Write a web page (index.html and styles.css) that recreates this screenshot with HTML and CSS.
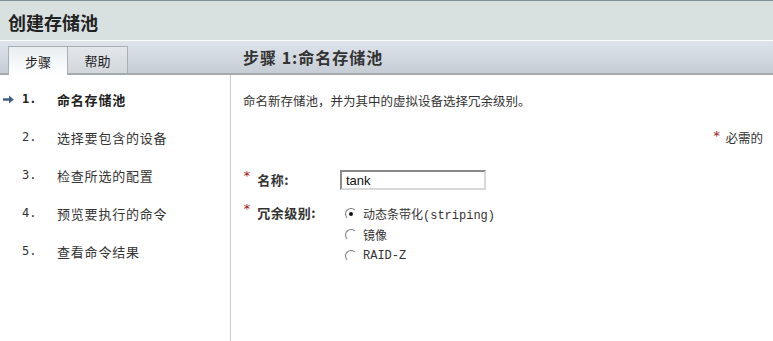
FILE: index.html
```html
<!DOCTYPE html>
<html>
<head>
	<title>创建存储池</title>
	<link rel="stylesheet" href="styles.css">
</head>
<body>
	<div class="_wizard">
		<div class="_head">
			<h1 class="_title">创建存储池</h1>
		</div>
		<div class="_bar">
			<div class="_tabs">
				<div class="_tab _active">步骤</div>
				<div class="_tab">帮助</div>
			</div>
			<h2 class="_step-title">步骤 1:命名存储池</h2>
		</div>
		<div class="_main">
			<ol class="_steps">
				<li class="_step _current">
					<span class="_arrow"><svg width="11" height="9" viewBox="0 0 11 9"><path d="M0 3.2h6V0.5L10.8 4.5 6 8.5V5.8H0z" fill="#3f5f86"/></svg></span>
					<span class="_num">1.</span>
					<span class="_label">命名存储池</span>
				</li>
				<li class="_step"><span class="_arrow"></span><span class="_num">2.</span><span class="_label">选择要包含的设备</span></li>
				<li class="_step"><span class="_arrow"></span><span class="_num">3.</span><span class="_label">检查所选的配置</span></li>
				<li class="_step"><span class="_arrow"></span><span class="_num">4.</span><span class="_label">预览要执行的命令</span></li>
				<li class="_step"><span class="_arrow"></span><span class="_num">5.</span><span class="_label">查看命令结果</span></li>
			</ol>
			<div class="_content">
				<p class="_desc">命名新存储池，并为其中的虚拟设备选择冗余级别。</p>
				<p class="_required"><span class="_star">*</span> 必需的</p>
				<div class="_field">
					<div class="_field-label"><span class="_star">*</span>名称:</div>
					<input type="text" class="_input" value="tank">
				</div>
				<div class="_field _levels">
					<div class="_field-label"><span class="_star">*</span>冗余级别:</div>
					<div class="_options">
						<label class="_option"><span class="_radio _checked"></span>动态条带化(striping)</label>
						<label class="_option"><span class="_radio"></span>镜像</label>
						<label class="_option"><span class="_radio"></span>RAID-Z</label>
					</div>
				</div>
			</div>
		</div>
	</div>
</body>
</html>
```

FILE: styles.css
```css
	html, body {
		margin: 0;
		height: 100%;
		background: #fff;
		color: #333;
		font-family: "Noto Sans CJK SC", "DejaVu Sans", sans-serif;
		font-size: 13px;
	}

	._wizard {
		display: flex;
		flex-direction: column;
		height: 100%;
		border-top: 1px solid #7d8c95;
		box-sizing: border-box;
	}

	._head {
		height: 39px;
		background: #d8e0e0;
		border-bottom: 1px solid #fbfdfd;
		display: flex;
		align-items: center;
		padding-left: 8px;
		flex-shrink: 0;
	}

	._title {
		margin: 0;
		font-size: 18px;
		font-weight: bold;
		color: #222;
		line-height: 1;
		margin-top: 2px;
	}

	._bar {
		height: 32px;
		background: linear-gradient(#dfe4ec, #c6cdd4);
		border-bottom: 2px solid #a4aaae;
		display: flex;
		align-items: flex-end;
		flex-shrink: 0;
		padding-right: 7px;
	}

	._tabs {
		width: 231px;
		display: flex;
		padding-left: 8px;
		box-sizing: border-box;
		align-self: stretch;
		align-items: flex-end;
	}

	._tab {
		width: 60px;
		height: 29px;
		line-height: 29px;
		text-align: center;
		font-size: 13px;
		color: #222;
		border: 1px solid #a8afb5;
		border-bottom: none;
		box-sizing: border-box;
		background: linear-gradient(#e3e7ec, #d2d7dc);
		margin-bottom: -2px;
	}

	._tab._active {
		background: linear-gradient(#e9edf0, #fff);
	}

	._tab + ._tab {
		border-left: none;
		height: 27px;
		margin-bottom: 0;
		line-height: 27px;
	}

	._step-title {
		margin: 0;
		align-self: center;
		padding-left: 12px;
		font-size: 16px;
		font-weight: bold;
		color: #333;
		letter-spacing: 1px;
	}

	._main {
		flex-grow: 1;
		display: flex;
	}

	._steps {
		width: 231px;
		flex-shrink: 0;
		margin: 0;
		padding: 5px 0 0;
		list-style: none;
		border-right: 1px solid #c9c9c9;
		box-sizing: border-box;
	}

	._step {
		display: flex;
		align-items: center;
		height: 38px;
	}

	._arrow {
		width: 22px;
		padding-left: 3px;
		box-sizing: border-box;
		display: flex;
		align-items: center;
	}

	._num {
		width: 35px;
		font-family: "DejaVu Sans Mono", monospace;
		font-size: 12px;
	}

	._label {
		font-size: 13px;
		letter-spacing: 0.8px;
	}

	._current ._num, ._current ._label {
		font-weight: bold;
		color: #222;
	}

	._content {
		flex-grow: 1;
		padding: 0 10px 0 12px;
	}

	._desc {
		margin: 18px 0 0;
		line-height: 16px;
		font-size: 12.5px;
	}

	._required {
		margin: 21px 0 0;
		text-align: right;
		line-height: 16px;
		font-size: 12.5px;
	}

	._star {
		color: #a31515;
		font-family: "DejaVu Sans Mono", monospace;
		font-size: 13px;
		font-weight: normal;
		vertical-align: top;
		line-height: 12px;
		margin-right: 2px;
	}

	._field {
		display: flex;
		align-items: center;
		margin-top: 24px;
	}

	._field-label {
		width: 97px;
		flex-shrink: 0;
		font-weight: bold;
		font-size: 13px;
		line-height: 20px;
		letter-spacing: 0.5px;
	}

	._field-label ._star {
		margin-right: 6px;
	}

	._input {
		width: 146px;
		height: 20px;
		box-sizing: border-box;
		border: 2px solid;
		border-color: #8a8a8a #d8d8d8 #d8d8d8 #8a8a8a;
		padding: 0 4px;
		font-family: "Liberation Sans", sans-serif;
		font-size: 13px;
		color: #111;
		outline: none;
	}

	._levels {
		margin-top: 13px;
		align-items: flex-start;
	}

	._options {
		display: flex;
		flex-direction: column;
		padding-left: 5px;
	}

	._option {
		display: flex;
		align-items: center;
		height: 21px;
		font-family: "Liberation Mono", "Noto Sans CJK SC", monospace;
		font-size: 12px;
	}

	._radio {
		width: 10px;
		height: 10px;
		border-radius: 50%;
		border: 1px solid;
		border-color: #7a7a7a #fff #fff #7a7a7a;
		margin-right: 6px;
		position: relative;
		flex-shrink: 0;
	}

	._radio._checked::after {
		content: "";
		position: absolute;
		left: 3px;
		top: 3px;
		width: 4px;
		height: 4px;
		border-radius: 50%;
		background: #111;
	}
```
